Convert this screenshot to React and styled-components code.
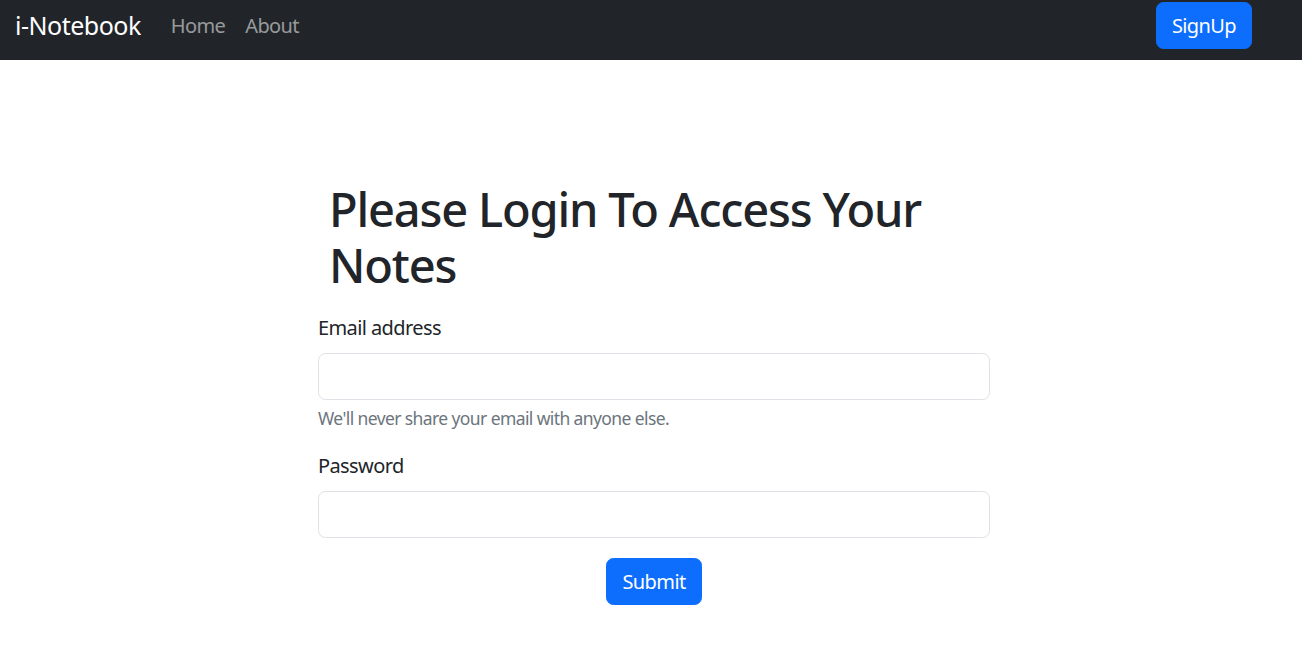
import React from "react";
import styled, { createGlobalStyle } from "styled-components";

const GlobalStyle = createGlobalStyle`
    * {
        box-sizing: border-box;
    }
    body {
        margin: 0;
        background: #fff;
        color: #212529;
        font-family: "Noto Sans", "Open Sans", sans-serif;
        font-size: 20px;
        line-height: 1.5;
        letter-spacing: -0.03em;
    }
`;

const Navbar = styled.nav`
    height: 60px;
    background: #212529;
    display: flex;
    align-items: flex-start;
    padding: 0 50px 0 15px;
`;

const Brand = styled.a`
    color: #fff;
    font-size: 25px;
    line-height: 37px;
    margin: 7px 20px 0 0;
    letter-spacing: -0.02em;
    text-decoration: none;
`;

const NavList = styled.ul`
    display: flex;
    list-style: none;
    margin: 11px 0 0;
    padding: 0;
    flex: 1;
`;

const NavLink = styled.a`
    display: block;
    padding: 0 10px;
    color: rgba(255, 255, 255, 0.55);
    font-size: 20px;
    line-height: 30px;
    text-decoration: none;
`;

const Button = styled.button`
    background: #0d6efd;
    color: #fff;
    border: 1px solid #0d6efd;
    border-radius: 7.5px;
    font-family: inherit;
    font-size: 20px;
    line-height: 30px;
    letter-spacing: inherit;
    padding: 7.5px 15px;
    margin-top: ${(props) => props.$top || "0px"};
    cursor: pointer;
`;

const Main = styled.main`
    padding: 121px 0 40px 318px;
`;

const Container = styled.div`
    width: 672px;
`;

const Title = styled.h1`
    font-size: 47px;
    font-weight: 500;
    line-height: 56.4px;
    letter-spacing: -0.025em;
    margin: 0 0 19px 11px;
`;

const Field = styled.div`
    margin-bottom: 20px;
`;

const Label = styled.label`
    display: block;
    margin-bottom: 10px;
`;

const Input = styled.input`
    display: block;
    width: 100%;
    height: 47px;
    padding: 7.5px 15px;
    font-family: inherit;
    font-size: 20px;
    border: 1px solid #dee2e6;
    border-radius: 7.5px;
    outline: none;
`;

const HelpText = styled.div`
    margin-top: 5px;
    font-size: 17.5px;
    line-height: 26.25px;
    color: #6c757d;
`;

const Center = styled.div`
    text-align: center;
`;

export default function App() {
    return (
        <>
            <GlobalStyle />
            <Navbar>
                <Brand href="#">i-Notebook</Brand>
                <NavList>
                    <li><NavLink href="#">Home</NavLink></li>
                    <li><NavLink href="#">About</NavLink></li>
                </NavList>
                <Button $top="2px">SignUp</Button>
            </Navbar>
            <Main>
                <Container>
                    <Title>Please Login To Access Your Notes</Title>
                    <form onSubmit={(e) => e.preventDefault()}>
                        <Field>
                            <Label htmlFor="email">Email address</Label>
                            <Input id="email" type="email" />
                            <HelpText>We'll never share your email with anyone else.</HelpText>
                        </Field>
                        <Field>
                            <Label htmlFor="password">Password</Label>
                            <Input id="password" type="password" />
                        </Field>
                        <Center>
                            <Button type="submit">Submit</Button>
                        </Center>
                    </form>
                </Container>
            </Main>
        </>
    );
}
